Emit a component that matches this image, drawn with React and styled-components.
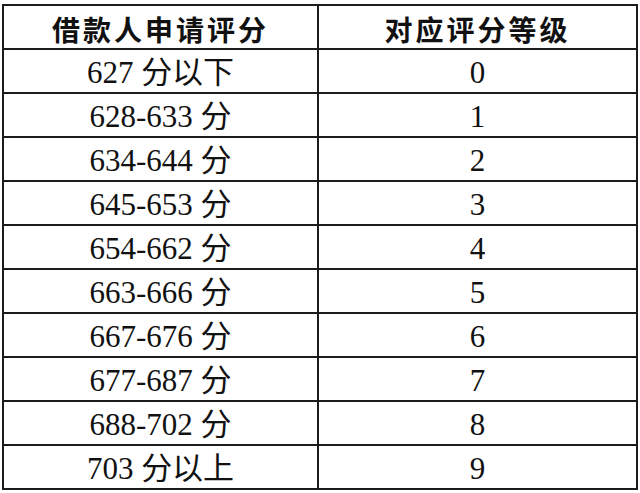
import React from 'react'
import { createGlobalStyle, styled } from 'styled-components'

const rows = [
  ['627 分以下', '0'],
  ['628-633 分', '1'],
  ['634-644 分', '2'],
  ['645-653 分', '3'],
  ['654-662 分', '4'],
  ['663-666 分', '5'],
  ['667-676 分', '6'],
  ['677-687 分', '7'],
  ['688-702 分', '8'],
  ['703 分以上', '9'],
]

const GlobalStyle = createGlobalStyle`
  html, body {
    margin: 0;
    padding: 0;
    background: #ffffff;
  }
`

const Page = styled.div`
  width: 640px;
  height: 493px;
  padding: 4px 0 0 2px;
  box-sizing: border-box;
  background: #ffffff;
`

const Table = styled.table`
  width: 634px;
  border-collapse: collapse;
  table-layout: fixed;
  color: #111111;
`

const Row = styled.tr`
  height: 44px;
`

const Cell = styled.td`
  border: 2px solid #1c1c1c;
  padding: 0;
  text-align: center;
  vertical-align: middle;
  font-family: "Liberation Serif", "Noto Sans CJK SC", serif;
  font-size: 31px;
  line-height: 1;
  padding-top: 2px;
`

const HeadCell = styled.th`
  border: 2px solid #1c1c1c;
  padding: 4px 0 0 0;
  text-align: center;
  vertical-align: middle;
  font-family: "Noto Sans CJK SC", sans-serif;
  font-weight: 700;
  font-size: 28px;
  letter-spacing: 3px;
  line-height: 1;
`

const App = () => {
  return (
    <Page>
      <GlobalStyle />
      <Table>
        <colgroup>
          <col style={{ width: '315px' }} />
          <col style={{ width: '319px' }} />
        </colgroup>
        <thead>
          <Row>
            <HeadCell>借款人申请评分</HeadCell>
            <HeadCell>对应评分等级</HeadCell>
          </Row>
        </thead>
        <tbody>
          {rows.map(([score, level]) => (
            <Row key={score}>
              <Cell>{score}</Cell>
              <Cell>{level}</Cell>
            </Row>
          ))}
        </tbody>
      </Table>
    </Page>
  )
}

export default App
